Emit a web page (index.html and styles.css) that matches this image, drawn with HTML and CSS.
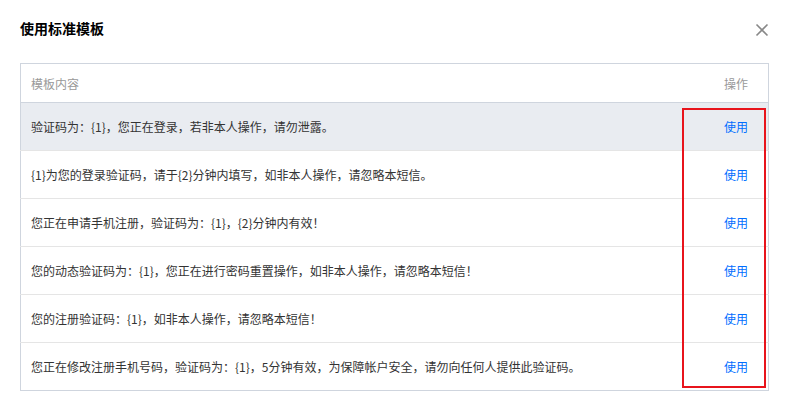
FILE: index.html
```html
<!DOCTYPE html>
<html lang="zh-CN">
<head>
    <meta charset="UTF-8">
    <meta name="viewport" content="width=device-width, initial-scale=1.0">
    <title>使用标准模板</title>
    <link rel="stylesheet" href="styles.css">
</head>
<body>
    <div class="dialog">
        <div class="dialog-head">
            <h3 class="dialog-title">使用标准模板</h3>
            <button class="close" aria-label="关闭">
                <svg width="14" height="14" viewBox="0 0 14 14">
                    <path d="M1.5 1.5 L12.5 12.5 M12.5 1.5 L1.5 12.5" stroke="#888" stroke-width="1.6" fill="none"/>
                </svg>
            </button>
        </div>

        <div class="table-wrap">
            <table class="tpl-table">
                <thead>
                    <tr>
                        <th>模板内容</th>
                        <th class="op">操作</th>
                    </tr>
                </thead>
                <tbody>
                    <tr class="hover">
                        <td>验证码为：{1}，您正在登录，若非本人操作，请勿泄露。</td>
                        <td class="op"><a href="#">使用</a></td>
                    </tr>
                    <tr>
                        <td>{1}为您的登录验证码，请于{2}分钟内填写，如非本人操作，请忽略本短信。</td>
                        <td class="op"><a href="#">使用</a></td>
                    </tr>
                    <tr>
                        <td>您正在申请手机注册，验证码为：{1}，{2}分钟内有效！</td>
                        <td class="op"><a href="#">使用</a></td>
                    </tr>
                    <tr>
                        <td>您的动态验证码为：{1}，您正在进行密码重置操作，如非本人操作，请忽略本短信！</td>
                        <td class="op"><a href="#">使用</a></td>
                    </tr>
                    <tr>
                        <td>您的注册验证码：{1}，如非本人操作，请忽略本短信！</td>
                        <td class="op"><a href="#">使用</a></td>
                    </tr>
                    <tr>
                        <td>您正在修改注册手机号码，验证码为：{1}，5分钟有效，为保障帐户安全，请勿向任何人提供此验证码。</td>
                        <td class="op"><a href="#">使用</a></td>
                    </tr>
                </tbody>
            </table>
            <div class="mark"></div>
        </div>
    </div>
</body>
</html>
```

FILE: styles.css
```css
body {
    margin: 0;
    background: #fff;
    color: #333;
    font-family: "Noto Sans CJK SC", "Noto Sans", sans-serif;
    font-size: 12px;
}
.dialog {
    padding: 18px 17px 0 20px;
}
.dialog-head {
    display: flex;
    justify-content: space-between;
    align-items: flex-start;
    height: 20px;
    margin-bottom: 25px;
}
.dialog-title {
    margin: 0;
    font-size: 14px;
    line-height: 20px;
    font-weight: bold;
    color: #000;
}
.close {
    border: none;
    background: none;
    padding: 0;
    margin: 5px 0 0 0;
    width: 14px;
    height: 14px;
    cursor: pointer;
    display: flex;
}
.table-wrap {
    position: relative;
}
.tpl-table {
    width: 100%;
    border-collapse: collapse;
    border: 1px solid #cfd5de;
}
.tpl-table th {
    height: 38px;
    padding: 0 10px;
    text-align: left;
    font-weight: normal;
    color: #999;
    border-bottom: 1px solid #cfd5de;
}
.tpl-table td {
    height: 47px;
    padding: 0 10px;
    border-bottom: 1px solid #e5e5e5;
    color: #333;
}
.tpl-table tr:last-child td {
    border-bottom: none;
    height: 47px;
}
.tpl-table tr.hover td {
    background: #e9ecf1;
}
.tpl-table .op {
    text-align: right;
    padding-right: 20px;
    width: 60px;
}
.tpl-table a {
    color: #006eff;
    text-decoration: none;
}
/* annotation box drawn over the action column */
.mark {
    position: absolute;
    right: 3px;
    top: 45px;
    bottom: 3px;
    width: 80px;
    border: 2px solid #e8141c;
}
```
